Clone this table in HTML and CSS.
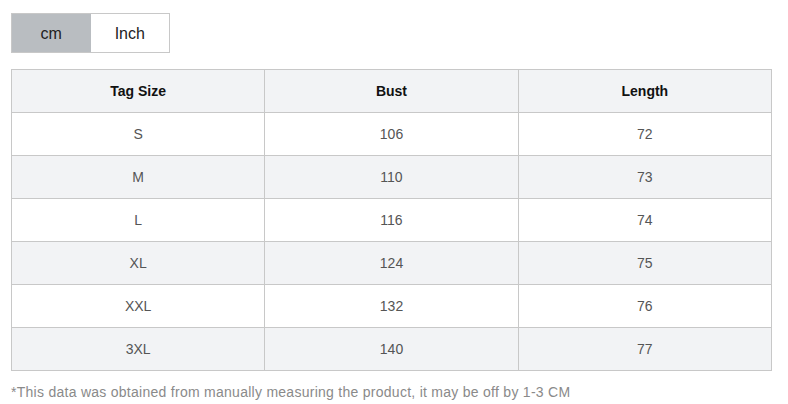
FILE: index.html
```html
<!DOCTYPE html>
<html>
<head>
<meta charset="utf-8">
<link rel="stylesheet" href="styles.css">
</head>
<body>
<div class="page">
  <div class="toggle">
    <div class="tbtn active">cm</div>
    <div class="tbtn">Inch</div>
  </div>
  <table class="sizes">
    <thead>
      <tr><th>Tag Size</th><th>Bust</th><th>Length</th></tr>
    </thead>
    <tbody>
      <tr><td>S</td><td>106</td><td>72</td></tr>
      <tr><td>M</td><td>110</td><td>73</td></tr>
      <tr><td>L</td><td>116</td><td>74</td></tr>
      <tr><td>XL</td><td>124</td><td>75</td></tr>
      <tr><td>XXL</td><td>132</td><td>76</td></tr>
      <tr><td>3XL</td><td>140</td><td>77</td></tr>
    </tbody>
  </table>
  <p class="note">*This data was obtained from manually measuring the product, it may be off by 1-3 CM</p>
</div>
</body>
</html>
```
FILE: styles.css
```css
html, body {
  margin: 0;
  padding: 0;
  background: #fff;
}
body {
  font-family: "Liberation Sans", Arial, sans-serif;
}
.page {
  padding: 13px 17px 0 11px;
}
.toggle {
  display: flex;
  width: 159px;
  height: 40px;
  box-sizing: border-box;
  border: 1px solid #c8c8c8;
}
.tbtn {
  flex: 1;
  display: flex;
  align-items: center;
  justify-content: center;
  padding-top: 1px;
  font-size: 16px;
  color: #222;
  background: #fff;
}
.tbtn.active {
  background: #b9bdc1;
}
.sizes {
  margin-top: 16px;
  width: 761px;
  border-collapse: collapse;
  table-layout: fixed;
}
.sizes th, .sizes td {
  border: 1px solid #c8c8c8;
  height: 42px;
  padding: 0;
  text-align: center;
  font-size: 14px;
}
.sizes th {
  background: #f2f3f5;
  color: #111;
  font-weight: bold;
}
.sizes td {
  color: #555;
}
.sizes tbody tr:nth-child(even) td {
  background: #f2f3f5;
}
.note {
  margin: 13px 0 0;
  font-size: 14px;
  letter-spacing: 0.27px;
  color: #8a8a8a;
}
```
